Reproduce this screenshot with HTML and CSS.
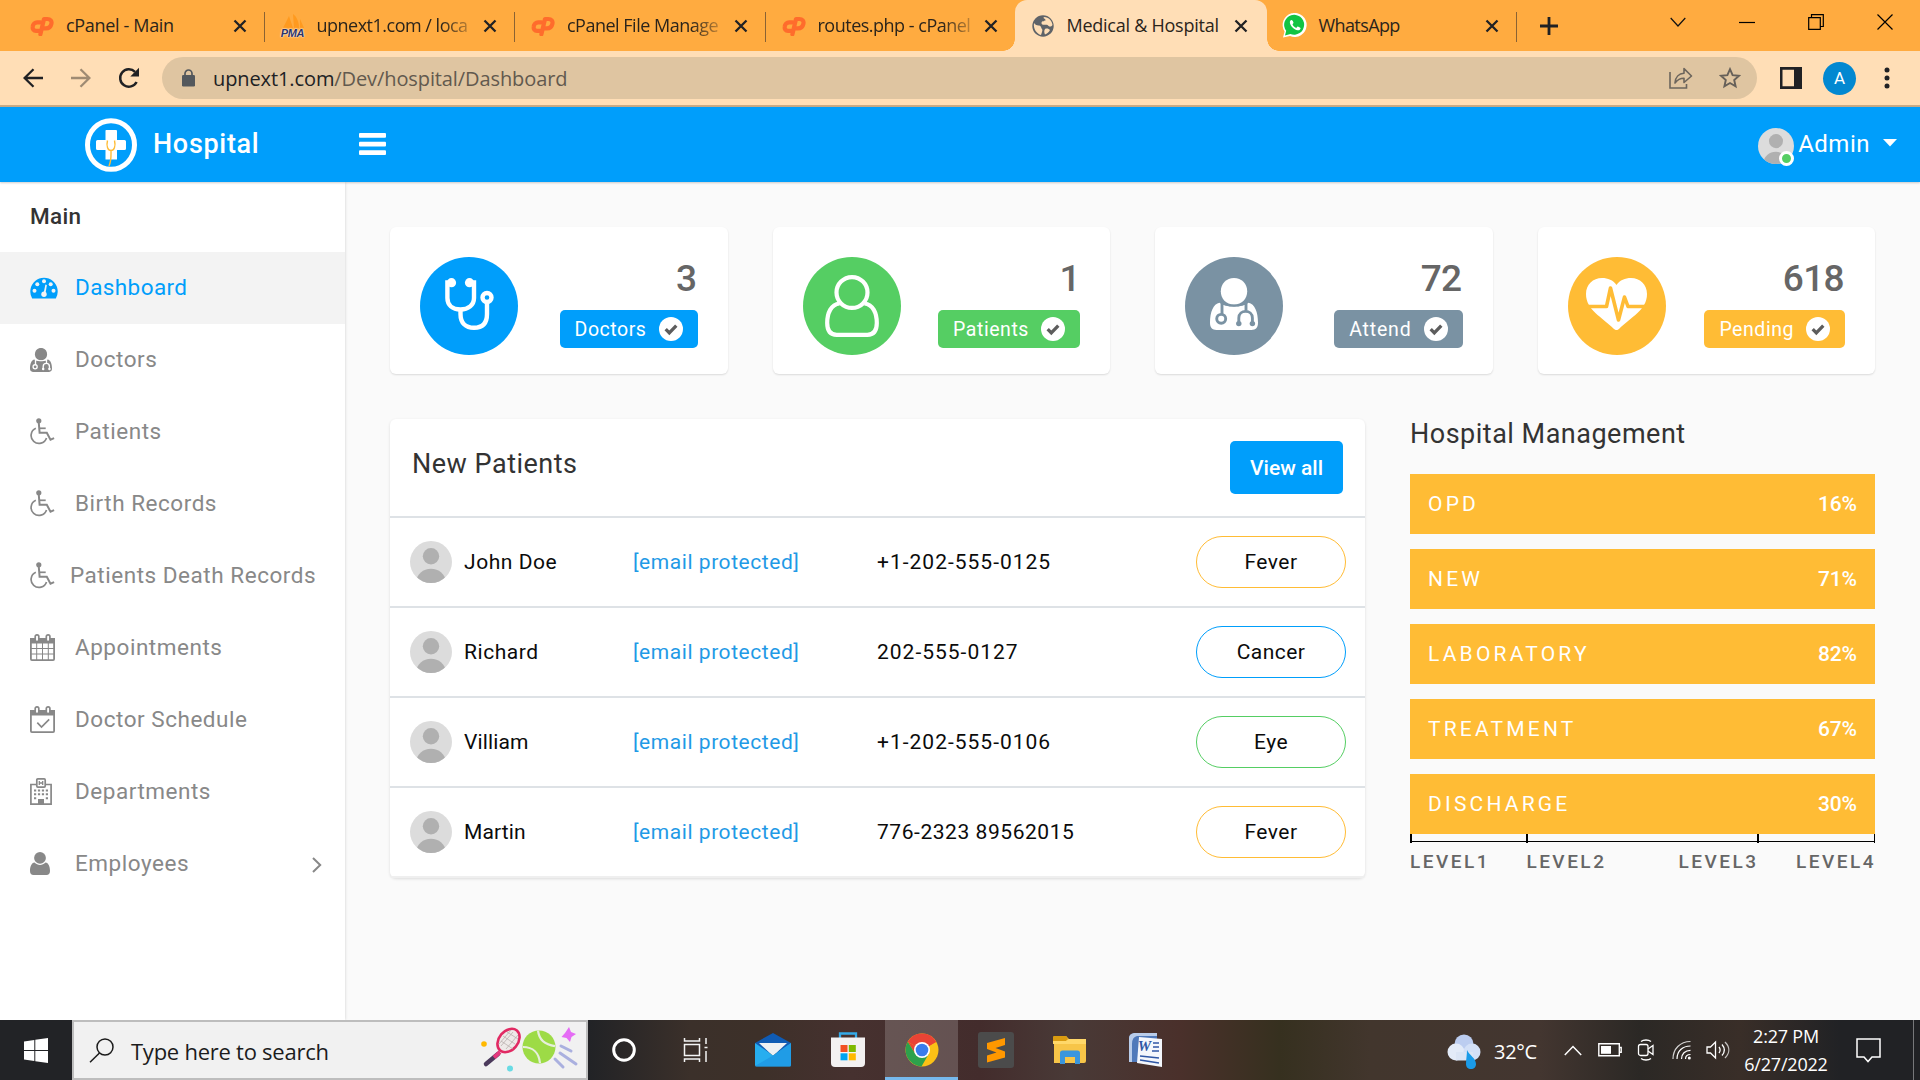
FILE: index.html
```html
<!DOCTYPE html>
<html lang="en">
<head>
<meta charset="utf-8">
<title>Medical &amp; Hospital</title>
<link rel="stylesheet" href="styles.css">
</head>
<body>
<svg class="defs" width="0" height="0" aria-hidden="true">
  <symbol id="cp" viewBox="0 0 24 20"><g fill="none" stroke="#ff6c2c" stroke-width="4.2" stroke-linejoin="round"><path d="M10.5 6.300H7.200a4.700 4.700 0 0 0-4.500 4.200c-.4 2.600 1 4.300 3.300 4.300h3.200" stroke-linecap="round"/><path d="M10.400 18.200l3.600-15.200h3.300c3.200 0 4.700 1.800 4.100 4.700-.6 3-2.700 4.700-5.600 4.700h-1.600" stroke-linecap="round"/></g></symbol>
  <symbol id="x" viewBox="0 0 14 14"><path d="M1.500 1.500l11 11M12.500 1.500l-11 11" stroke="#202124" stroke-width="2.300" fill="none"/></symbol>
  <symbol id="person" viewBox="0 0 42 42"><clipPath id="pc"><circle cx="21" cy="21" r="21"/></clipPath><g clip-path="url(#pc)"><path fill="#dcdcdc" d="M0 0h42v42H0z"/><circle cx="21" cy="15.300" r="8.200" fill="#b0b0b0"/><ellipse cx="21" cy="40.500" rx="14.500" ry="12.700" fill="#b0b0b0"/></g></symbol>
  <symbol id="wheel" viewBox="0 0 25 27"><g fill="none" stroke="currentColor" stroke-width="1.700"><path d="M5.800 10.300a7.900 7.900 0 1 0 10.700 9.700"/><path d="M8.800 5l.8 9.700h7.200l3.700 7 3.600-1.500" stroke-width="2"/><path d="M9.300 10.300h6.400" /></g><circle cx="8.800" cy="2.800" r="2.600" fill="currentColor"/></symbol>
  <symbol id="doc" viewBox="0 0 60 65"><g fill="currentColor"><path d="M30 0c9.500 0 16.500 7 16.500 16.500S40 33 30 33 13.500 26 13.500 16.500 20.500 0 30 0z"/><path d="M12 31c6 6 30 6 36 0 8 1 12 12 12 25 0 6-3 9-8 9H8c-5 0-8-3-8-9 0-13 4-24 12-25z"/></g><g class="cut" fill="none" stroke-width="3.600"><path d="M13 29.500c7 7 27 7 34 0" stroke-width="2.500"/><path d="M15 30v16M45 30v11"/><circle cx="14" cy="51" r="5.600"/><path d="M36 57v-7c0-11 17-11 17 0v7"/></g><g class="cutfill"><circle cx="36" cy="57" r="3.400"/><circle cx="53" cy="57" r="3.400"/></g></symbol>
  <symbol id="check" viewBox="0 0 24 24"><circle cx="12" cy="12" r="12" fill="#fff"/><path d="M6.700 12.200l3.600 3.700 7-7.300" fill="none" stroke="#5d5d5d" stroke-width="3.300"/></symbol>
  <symbol id="cal" viewBox="0 0 25 27"><rect x=".9" y="4.900" width="23.200" height="21.200" rx="1" fill="none" stroke="currentColor" stroke-width="1.800"/><path d="M0 4h25v5.500H0z" fill="currentColor"/><g fill="#fff" stroke="currentColor" stroke-width="1.700"><rect x="5.200" y=".9" width="3.600" height="6.600" rx="1.700"/><rect x="16.300" y=".9" width="3.600" height="6.600" rx="1.700"/></g></symbol>
</svg>

<div class="tabstrip">
  <div class="tab"><svg class="fav" width="26" height="20"><use href="#cp"/></svg><span>cPanel - Main</span><svg class="x" width="14" height="14"><use href="#x"/></svg></div>
  <div class="tab"><span class="pma"><svg width="24" height="15" viewBox="0 0 24 15"><path d="M2 14L8 2l4 12zM13 14L12 0c4 3 6 8 6 14zM19 14V5l4 9z" fill="#ff9a1f"/></svg><b>PMA</b></span><span class="fade">upnext1.com / loca</span><svg class="x" width="14" height="14"><use href="#x"/></svg></div>
  <div class="tab"><svg class="fav" width="26" height="20"><use href="#cp"/></svg><span class="fade">cPanel File Manage</span><svg class="x" width="14" height="14"><use href="#x"/></svg></div>
  <div class="tab last"><svg class="fav" width="26" height="20"><use href="#cp"/></svg><span class="fade">routes.php - cPanel</span><svg class="x" width="14" height="14"><use href="#x"/></svg></div>
  <div class="tab active"><svg class="fav" width="24" height="24" viewBox="0 0 24 24"><circle cx="12" cy="12" r="10.700" fill="#5f6368"/><path d="M3 9c3 4 6 1 7 4s2 2 1 5l-1 3c-4-1-8-6-7-12zM13 3c5 0 8 4 8.500 8-2 3-4 1-5 0s-6 1-6-2 4-1 4-3-3-1-1.500-3zM14 15c2-1 4 0 5 1-1 2-3 4-5 4.500-1-2-1-4 0-5.500z" fill="#ffdeb6"/></svg><span>Medical &amp; Hospital</span><svg class="x" width="14" height="14"><use href="#x"/></svg></div>
  <div class="tab"><svg class="fav" width="26" height="25" viewBox="0 0 26 25"><path d="M1 24.500l1.600-6A12 12 0 1 1 8 23z" fill="#fff"/><path d="M3 22.500l1.200-4.700A10 10 0 1 1 8.400 21z" fill="#12c443"/><path d="M9.700 7c-1.200.1-2 1.300-1.800 2.700.6 3.500 4 6.800 7.700 7.600 1.500.3 2.900-.7 3-2.100 0-.5-2.700-1.900-3.100-1.600l-1.300 1.300c-1.600-.6-3.100-2-3.700-3.600l1-1.200c.2-.6-1-3-1.800-3.100z" fill="#fff"/></svg><span class="tight">WhatsApp</span><svg class="x" width="14" height="14"><use href="#x"/></svg></div>
  <svg class="plus" width="18" height="18" viewBox="0 0 18 18"><path d="M9 0v18M0 9h18" stroke="#202124" stroke-width="2.800"/></svg>
  <div class="caption">
    <svg width="16" height="10" viewBox="0 0 16 10"><path d="M.7 1L8 9l7.300-8" fill="none" stroke="#111" stroke-width="1.200"/></svg>
    <svg width="16" height="10" viewBox="0 0 16 10"><path d="M0 5.500h16" stroke="#000" stroke-width="1.200"/></svg>
    <svg width="16" height="16" viewBox="0 0 16 16"><path d="M.7 3.700h11.600v11.600H.7zM3.500 3.500V.7h11.800v11.800h-2.800" fill="none" stroke="#000" stroke-width="1.200"/></svg>
    <svg width="16" height="16" viewBox="0 0 16 16"><path d="M.5.500l15 15M15.500.5l-15 15" stroke="#000" stroke-width="1.200"/></svg>
  </div>
</div>

<div class="toolbar">
  <svg class="nav" width="20" height="20" viewBox="0 0 20 20"><path d="M20 10H1.600M10.500 1.200L1.600 10l8.900 8.800" fill="none" stroke="#202124" stroke-width="2.300"/></svg>
  <svg class="nav" width="20" height="20" viewBox="0 0 20 20"><path d="M0 10h18.400M9.500 1.200l8.900 8.800-8.900 8.800" fill="none" stroke="#9f8b73" stroke-width="2.300"/></svg>
  <svg class="nav" width="22" height="22" viewBox="0 0 22 22"><path d="M18.600 15A8.700 8.700 0 1 1 17 4.800" fill="none" stroke="#202124" stroke-width="2.500"/><path d="M21 .8v8.700h-8.700z" fill="#202124"/></svg>
  <div class="omnibox">
    <svg width="13" height="18" viewBox="0 0 13 18"><rect y="6" width="13" height="11.500" rx="1.300" fill="#54585c"/><path d="M3 7V4.500a3.500 3.500 0 0 1 7 0V7" fill="none" stroke="#54585c" stroke-width="1.700"/></svg>
    <span class="url">upnext1.com<i>/Dev/hospital/Dashboard</i></span>
    <svg width="24" height="22" viewBox="0 0 24 22"><path d="M1 5v16h16.500v-4" fill="none" stroke="#6c655c" stroke-width="1.600"/><path d="M6 16c.3-6 4-9.500 9-9.700V1.600L22.500 9 15 15.500V11.200c-4 0-6.600 1.500-9 4.800z" fill="none" stroke="#6c655c" stroke-width="1.600" stroke-linejoin="round"/></svg>
    <svg width="22" height="22" viewBox="0 0 22 22"><path d="M11 2.200l2.600 5.900 6.400.6-4.800 4.300 1.400 6.300-5.600-3.300-5.600 3.300L6.800 13 2 8.700l6.400-.6z" fill="none" stroke="#666059" stroke-width="1.900"/></svg>
  </div>
  <svg class="panel" width="22" height="22" viewBox="0 0 22 22"><path fill="#202124" fill-rule="evenodd" d="M0 0h22v22H0zM2.500 2.700v16.600H14V2.700z"/></svg>
  <span class="profile">A</span>
  <svg class="dots" width="6" height="22" viewBox="0 0 6 22"><g fill="#202124"><circle cx="3" cy="3" r="2.500"/><circle cx="3" cy="11" r="2.500"/><circle cx="3" cy="19" r="2.500"/></g></svg>
</div>

<header class="appbar">
  <svg class="logo" width="52" height="54" viewBox="0 0 52 54"><ellipse cx="26" cy="27" rx="23.500" ry="24.300" fill="none" stroke="#fff" stroke-width="5"/><path d="M21 12h10q1 0 1 1v9h7.500q1.500 0 1.500 1.500v7q0 1.500-1.500 1.500H32v9.500H20.500V32h-8q-1.500 0-1.500-1.500v-7q0-1.500 1.500-1.500h8v-9q0-1 .5-1z" fill="#fff"/><path d="M22.500 22.500c-1.500 6 .5 10 3.500 10s5-4 3.500-10M26 32.500c0 6 .5 10-2 15.500" fill="none" stroke="#ffbc35" stroke-width="1.400"/></svg>
  <span class="brand">Hospital</span>
  <svg class="burger" width="27" height="22" viewBox="0 0 27 22"><g fill="#fff"><rect width="27" height="4.800" rx="1"/><rect y="8.700" width="27" height="4.800" rx="1"/><rect y="17.300" width="27" height="4.700" rx="1"/></g></svg>
  <div class="user"><span class="who"><svg width="36" height="36"><use href="#person"/></svg><i></i></span><span>Admin</span><svg width="14" height="8" viewBox="0 0 14 8"><path d="M0 0h14L7 7.500z" fill="#fff"/></svg></div>
</header>

<div class="main">
  <nav class="side">
    <h6>Main</h6>
    <a class="on"><svg width="28" height="22" viewBox="0 0 28 22"><path d="M2.200 21.500A13.700 13.700 0 1 1 25.800 21.500z" fill="#009efb"/><g fill="#f3f3f3"><circle cx="4.500" cy="13.800" r="2"/><circle cx="7.300" cy="7.200" r="2"/><circle cx="14" cy="4.200" r="2"/><circle cx="20.700" cy="7.200" r="2"/><circle cx="23.500" cy="13.800" r="2"/><circle cx="14" cy="17.300" r="2.700"/><path d="M13.400 17l2-9.500 1.500.4-1.600 9.600z"/></g></svg><span>Dashboard</span></a>
    <a><svg width="22" height="24"><use href="#doc"/></svg><span>Doctors</span></a>
    <a><svg width="25" height="27"><use href="#wheel"/></svg><span>Patients</span></a>
    <a><svg width="25" height="27"><use href="#wheel"/></svg><span>Birth Records</span></a>
    <a class="near"><svg width="25" height="27"><use href="#wheel"/></svg><span>Patients Death Records</span></a>
    <a><svg width="25" height="27" viewBox="0 0 25 27"><use href="#cal" width="25" height="27"/><path d="M6.700 9v17M12.500 9v17M18.300 9v17M1 14.500h23M1 20h23" stroke="currentColor" stroke-width="1"/></svg><span>Appointments</span></a>
    <a><svg width="25" height="27" viewBox="0 0 25 27"><use href="#cal" width="25" height="27"/><path d="M7.300 16.700l4.200 4.300 7.700-7.700" fill="none" stroke="currentColor" stroke-width="1.700"/></svg><span>Doctor Schedule</span></a>
    <a><svg width="22" height="27" viewBox="0 0 22 27"><g fill="none" stroke="currentColor" stroke-width="1.700"><path d="M6.500 6.500H.9v19.600h20.200V6.500h-5.600"/><rect x="6.800" y=".9" width="8.400" height="8.200" rx="1"/></g><path d="M9.300 3v4M12.700 3v4M9.300 5h3.400" stroke="currentColor" stroke-width="1.300"/><path d="M4 12.500h14M4 16.300h14" stroke="currentColor" stroke-width="1.900" stroke-dasharray="2.200 1.730"/><path d="M4 20.300h2.200M15.800 20.300H18" stroke="currentColor" stroke-width="1.900"/><path d="M8 21h6v5H8z" fill="currentColor"/></svg><span>Departments</span></a>
    <a><svg width="20" height="23" viewBox="0 0 20 23"><circle cx="10" cy="5.900" r="5.900" fill="currentColor"/><path d="M4.500 10.500c3 3.300 8 3.300 11 0 3 .4 4.500 4 4.500 8.500 0 2.500-1.300 4-3.500 4h-13C1.300 23 0 21.500 0 19c0-4.500 1.500-8.100 4.500-8.500z" fill="currentColor"/></svg><span>Employees</span><svg class="chev" width="10" height="16" viewBox="0 0 10 16"><path d="M1 1l7.200 7L1 15" fill="none" stroke="currentColor" stroke-width="2"/></svg></a>
  </nav>

  <div class="content">
    <section class="cards">
      <div class="card blue"><span class="disc"><svg width="49" height="52" viewBox="0 0 49 52"><g fill="none" stroke="#fff" stroke-width="4.400"><path d="M6 4.500H2.400V20c0 7 5 11.500 13 11.500S29 27 29 20V4.500h-4"/><path d="M15.500 31.500V36c0 9 5 13.800 13.500 13.800S42 45 42 36V25"/><circle cx="42" cy="19.500" r="4.500"/></g><circle cx="6.500" cy="4.700" r="4.600" fill="#fff"/><circle cx="24.500" cy="4.700" r="4.600" fill="#fff"/></svg></span><div><strong>3</strong><span class="tag">Doctors<svg width="24" height="24"><use href="#check"/></svg></span></div></div>
      <div class="card green"><span class="disc"><svg width="54" height="62" viewBox="0 0 54 62"><g fill="none" stroke="#fff" stroke-width="4.200"><ellipse cx="27" cy="17.500" rx="15.500" ry="15.400"/><path d="M14.500 28.500C6 29.500 2.200 38 2.200 48c0 8 3.500 11.800 9.500 11.800h30.600c6 0 9.500-3.800 9.500-11.800 0-10-3.800-18.500-12.300-19.500"/></g></svg></span><div><strong>1</strong><span class="tag">Patients<svg width="24" height="24"><use href="#check"/></svg></span></div></div>
      <div class="card slate"><span class="disc"><svg width="48" height="52"><use href="#doc"/></svg></span><div><strong>72</strong><span class="tag">Attend<svg width="24" height="24"><use href="#check"/></svg></span></div></div>
      <div class="card amber"><span class="disc"><svg width="61" height="52" viewBox="0 0 61 52"><path d="M30.500 7C34 2 39 0 45 0c9 0 16 6.500 16 16 0 16-16 23-28 35-1.700 1.500-3.300 1.500-5 0C16 39 0 32 0 16 0 6.500 7 0 16 0c6 0 11 2 14.500 7z" fill="#fff"/><path d="M0 28.500h20.500l4-18.500 8 32 6-23 3.500 9.500h19" fill="none" stroke="#ffbc35" stroke-width="3.600" stroke-linejoin="round"/></svg></span><div><strong>618</strong><span class="tag">Pending<svg width="24" height="24"><use href="#check"/></svg></span></div></div>
    </section>

    <div class="lower">
      <section class="patients">
        <div class="head"><h4>New Patients</h4><a>View all</a></div>
        <div class="row"><svg width="42" height="42"><use href="#person"/></svg><span>John Doe</span><a>[email protected]</a><span class="ph">+1-202-555-0125</span><em class="amber">Fever</em></div>
        <div class="row"><svg width="42" height="42"><use href="#person"/></svg><span>Richard</span><a>[email protected]</a><span class="ph">202-555-0127</span><em class="blue">Cancer</em></div>
        <div class="row"><svg width="42" height="42"><use href="#person"/></svg><span class="vil">Villiam</span><a>[email protected]</a><span class="ph">+1-202-555-0106</span><em class="green">Eye</em></div>
        <div class="row"><svg width="42" height="42"><use href="#person"/></svg><span class="vil">Martin</span><a>[email protected]</a><span>776-2323 89562015</span><em class="amber">Fever</em></div>
      </section>
      <section class="manage">
        <h4>Hospital Management</h4>
        <div class="bar"><span>OPD</span><b>16%</b></div>
        <div class="bar"><span>NEW</span><b>71%</b></div>
        <div class="bar"><span>LABORATORY</span><b>82%</b></div>
        <div class="bar"><span>TREATMENT</span><b>67%</b></div>
        <div class="bar"><span>DISCHARGE</span><b>30%</b></div>
        <svg class="axis" width="465" height="9" viewBox="0 0 465 9"><path d="M0 7h465v1H0zM0 0h2v9H0zM116 0h2v9h-2zM347 0h2v9h-2zM464 0h1v9h-1z"/></svg>
        <div class="levels"><span>LEVEL1</span><span>LEVEL2</span><span class="r">LEVEL3</span><span class="r">LEVEL4</span></div>
      </section>
    </div>
  </div>
</div>

<footer class="taskbar">
  <div class="start"><svg width="24" height="25" viewBox="0 0 24 25"><path d="M0 3.500L10.300 2v10H0zM11.300 1.800L24 0v12H11.300zM0 13h10.300v10L0 21.500zM11.300 13H24v12l-12.700-1.800z" fill="#fff"/></svg></div>
  <div class="search">
    <svg width="25" height="25" viewBox="0 0 25 25"><circle cx="16" cy="9" r="8" fill="none" stroke="#1b1b1b" stroke-width="1.500"/><path d="M10.500 15L1 24.300" stroke="#1b1b1b" stroke-width="1.500"/></svg>
    <span>Type here to search</span>
    <svg class="art" width="98" height="48" viewBox="0 0 98 48"><circle cx="3" cy="18" r="2.800" fill="#ffb900"/><circle cx="29" cy="42.500" r="3" fill="#69dbe4"/><path d="M17 28L5 38" stroke="#4b3a5c" stroke-width="4.500" stroke-linecap="round"/><path d="M19 26l-6 5.500" stroke="#e5397d" stroke-width="4"/><ellipse cx="27.500" cy="14.500" rx="13" ry="9.500" transform="rotate(-50 27.500 14.500)" fill="#eee9e8" stroke="#e12a63" stroke-width="2.600"/><path d="M20 15l12 8M22 10l12 8M26 6l11 7M20 20l12-14M25 23l12-14M18 18L30 4" stroke="#b3aaa8" stroke-width=".7"/><circle cx="58" cy="21" r="16.500" fill="#9ddb46"/><path d="M57 4.700c1 9 6 14 17 15.500M42 21c10 0 16 6 17 16" fill="none" stroke="#e7efdc" stroke-width="2.200"/><path d="M88 1l2 5 5 2-4.500 3-1.500 5-3.500-4-5-1 3.500-4z" fill="#e56cf5"/><path d="M80 20l10 5M79 27l16 11M74 33l8 8" stroke="#aab0df" stroke-width="3" stroke-linecap="round"/></svg>
  </div>
  <div class="apps">
    <i><svg width="26" height="26" viewBox="0 0 26 26"><circle cx="13" cy="13" r="10.300" fill="none" stroke="#fff" stroke-width="3"/></svg></i>
    <i class="view"><svg width="26" height="26" viewBox="0 0 26 26"><path d="M1.500 1v3h15V1M1.500 25v-3h15v3M1.500 7.500h15v11h-15zM23 1v6M23 14v11M21.500 10.500h3" fill="none" stroke="#f4f4f4" stroke-width="1.500"/></svg></i>
    <i><svg width="38" height="34" viewBox="0 0 38 34"><path d="M1 10L19 0l18 10-7 10H8z" fill="#0f5bb4"/><path d="M5 10h28L19 23z" fill="#eef0f3"/><path d="M1 10l18 12.500L37 10v22q0 1.500-1.500 1.500h-33Q1 33.500 1 32z" fill="#27aeef"/><path d="M1 33L19 22.500 37 10v22q0 1.500-1.500 1.500h-33z" fill="#1c8fe0" opacity=".6"/></svg></i>
    <i><svg width="36" height="36" viewBox="0 0 36 36"><path d="M10 7V1.500h16V7" fill="none" stroke="#35aae8" stroke-width="2.300"/><path d="M1 5.500h34V31q0 4-4 4H5q-4 0-4-4z" fill="#f3f1f1"/><path d="M10.500 13h7v7h-7z" fill="#f25022"/><path d="M18.800 13h7v7h-7z" fill="#7fba00"/><path d="M10.500 21.300h7v7h-7z" fill="#00a4ef"/><path d="M18.800 21.300h7v7h-7z" fill="#ffb900"/></svg></i>
    <i class="open"><svg width="34" height="34" viewBox="0 0 34 34"><circle cx="17" cy="17" r="16.500" fill="#fbc116"/><path d="M17 17L2.700 8.800A16.500 16.500 0 0 1 31.300 8.800z" fill="#ea4335"/><path d="M17 17l14.300-8.200H17zM2.700 8.800L10.500 21l6.500-4z" fill="#ea4335"/><path d="M2.700 8.800A16.500 16.500 0 0 0 16.500 33.500L23.700 21 10.300 20.800z" fill="#2da14c"/><circle cx="17" cy="17" r="8" fill="#fff"/><circle cx="17" cy="17" r="6.300" fill="#3a7cec"/></svg></i>
    <i><svg width="36" height="36" viewBox="0 0 36 36"><rect width="36" height="36" rx="3" fill="#4b4b4b"/><path d="M27 6v7l-9.500 3 9.500 3.500v6L9 30.500v-7l9.500-3L9 17v-6z" fill="#ff9800"/></svg></i>
    <i><svg width="34" height="28" viewBox="0 0 34 28"><path d="M1 0h12l3 3h17v22q0 2-2 2H1z" fill="#f7c548"/><path d="M0 1q0-1 1-1h12l2 3-2 2H0z" fill="#d99b10"/><path d="M0 5h13l3-2h17v5H0z" fill="#ffd869"/><path d="M7 28V17q0-2.500 2.500-2.500h15Q27 14.500 27 17v11h-5v-7H12v7z" fill="#3a96dd"/></svg></i>
    <i><span class="word"><svg width="34" height="36" viewBox="0 0 34 36"><path d="M6 1h23v29H1V6q0-4 5-5z" fill="#4f79ba"/><path d="M6 1h23v3H9Q4 5 4 12v18H1V6q0-4 5-5z" fill="#b9cdea"/><path d="M11 5l23 2v28L9 31z" fill="#f4f7fc"/><path d="M25 11h6M25 15h6M24 19h7M12 24l19 2M12 28l19 3" stroke="#2f57a5" stroke-width="1.700"/></svg><b>W</b></span></i>
  </div>
  <div class="tray">
    <svg class="weather" width="36" height="36" viewBox="0 0 36 36"><circle cx="17" cy="10" r="9.500" fill="#bccdf0"/><circle cx="9" cy="18" r="8.500" fill="#e3ebf8"/><circle cx="25" cy="18" r="8.500" fill="#d3e0f7"/><path d="M9 18h17v8.500H9z" fill="#dbe5f5"/><path d="M20 16c2 5 9 8 9 14 0 3-2 5-5 5s-5-2-5-5c0-5 1-9 1-14z" fill="#1a9be8"/></svg>
    <span class="temp">32°C</span>
    <svg class="up" width="18" height="11" viewBox="0 0 18 11"><path d="M.8 10L9 1.500l8.200 8.500" fill="none" stroke="#fff" stroke-width="1.500"/></svg>
    <svg class="bat" width="24" height="14" viewBox="0 0 24 14"><path d="M.8.800h20.500v12H.8zM21.500 4.500h1.700v4.800h-1.700" fill="none" stroke="#fff" stroke-width="1.400"/><path d="M3 3h10v7.800H3z" fill="#fff"/></svg>
    <svg class="meet" width="18" height="22" viewBox="0 0 18 22"><g fill="none" stroke="#fff" stroke-width="1.300"><rect x="1.500" y="5.500" width="9.500" height="11" rx="2"/><path d="M11 10l5-3.500v9L11 12M4 2.500c2.500-2 7.500-2 10 0M4 19.500c2.500 2 7.500 2 10 0"/></g></svg>
    <svg class="wifi" width="20" height="20" viewBox="0 0 20 20"><g fill="none" stroke="#fff" stroke-width="1.200"><path d="M1 19C1 9 8 1.500 18.500 1.500" opacity=".8"/><path d="M5 19C5 11 10.500 6 18.500 6"/><path d="M9.500 19c0-5 3.500-8.700 9-8.700"/><path d="M13.500 19c0-3 2-4.500 5-4.500"/></g><circle cx="17.300" cy="18" r="1.500" fill="#fff"/></svg>
    <svg class="vol" width="24" height="20" viewBox="0 0 24 20"><g fill="none" stroke="#fff" stroke-width="1.300"><path d="M1 7h3.500L9.500 2v16l-5-5H1z"/><path d="M13 7c1.500 2 1.500 4 0 6M16 4.500c3 3.500 3 7.500 0 11"/><path d="M19 2c5 5 5 11 0 16" opacity=".7"/></g></svg>
    <div class="clock"><span>2:27 PM</span><span>6/27/2022</span></div>
    <svg class="note" width="25" height="25" viewBox="0 0 25 25"><path d="M1 1h23v18H16l-4 4.500L8 19H1z" fill="none" stroke="#fff" stroke-width="1.500"/></svg>
    <s></s>
  </div>
</footer>
</body>
</html>
```
FILE: styles.css
```css
*{box-sizing:border-box}
body{margin:0;width:1920px;height:1080px;overflow:hidden;background:#fafafa;font-family:Roboto,"Liberation Sans",sans-serif;display:flex;flex-direction:column}
h4,h6{margin:0;font-weight:400}
i,em{font-style:normal}
svg{flex:none;display:block}
.defs{position:absolute}

/* browser chrome */
.tabstrip{height:51px;background:#ffab40;display:flex;padding-left:14px;font:18px "Open Sans",sans-serif;letter-spacing:-.33px;color:#2b241b;flex:none}
.tab{width:250.5px;display:flex;align-items:center;padding:0 18px 0 15px;position:relative}
.tab>span:not(.pma){margin:-1px 0 0 11px;white-space:nowrap}
.tab>.fade{letter-spacing:-.5px;-webkit-mask-image:linear-gradient(90deg,#000 124px,rgba(0,0,0,.15) 158px);mask-image:linear-gradient(90deg,#000 124px,rgba(0,0,0,.15) 158px)}
.tab>.tight{letter-spacing:-.6px}
.tab .x{margin-left:auto}
.tab::after{content:"";position:absolute;right:0;top:12px;width:1px;height:30px;background:#8a6233}
.tab.last::after,.tab.active::after{display:none}
.tab.active{background:#ffdeb6;border-radius:12px 12px 0 0;margin-left:-1.500px;width:252px;padding-right:19px;padding-left:16px;letter-spacing:-.25px}
.tab.active>span{margin-left:12px}
.tab.active::before{content:"";position:absolute;left:-12px;right:-12px;bottom:0;height:12px;background:radial-gradient(circle at 0 0,transparent 11.500px,#ffdeb6 12px) left/12px 12px no-repeat,radial-gradient(circle at 100% 0,transparent 11.500px,#ffdeb6 12px) right/12px 12px no-repeat}
.pma{width:26px;display:flex;flex-direction:column;align-items:center;margin-top:1px}
.pma b{font:italic 700 11px/9px "Liberation Sans",sans-serif;letter-spacing:-.3px;color:#2e3364;text-shadow:0 0 1px #fff,0 0 2px #fff}
.plus{margin:16.500px 0 0 23px}
.caption{margin-left:auto;display:flex;align-items:center;gap:53px;height:43px;padding-right:27px}
.toolbar{height:56px;background:#ffdeb6;border-bottom:2px solid #c9ab86;display:flex;align-items:center;flex:none;padding-left:23px}
.nav{margin-right:28px}
.nav+.nav{margin-right:27px}
.nav+.nav+.nav{margin-right:22px}
.omnibox{width:1595px;height:42px;border-radius:21px;background:#dfc5a1;display:flex;align-items:center;padding:0 16px 0 20px;font:20px "Open Sans",sans-serif;color:#202124;letter-spacing:-.1px}
.omnibox .url{margin:0 auto 0 18px}
.url i{color:#62594e}
.omnibox svg+svg{margin-left:26px}
.panel{margin-left:23px}
.profile{width:33px;height:33px;border-radius:50%;background:#0288d1;color:#fff;font:17px/33px Roboto,sans-serif;text-align:center;margin:0 28px 0 21px}

/* application header */
.appbar{height:75px;background:#009efb;color:#fff;display:flex;align-items:center;flex:none;padding-left:85px;box-shadow:0 1px 2px rgba(0,0,0,.2);position:relative}
.brand{font-size:27px;font-weight:500;letter-spacing:.7px;margin:-1px 0 0 16px;width:206px}
.burger{margin:-2px 0 0 0}
.user{margin-left:auto;display:flex;align-items:center;font-size:24px;font-weight:400;letter-spacing:.5px;padding-right:23px}
.user>span{margin-top:-1px}
.user>.who{position:relative;margin:3px 4px 0 0}
.who i{position:absolute;right:0;bottom:-2px;width:15px;height:15px;border:3px solid #fff;border-radius:50%;background:#55ce63}
.user>svg{margin:-4px 0 0 13px}

/* layout */
.main{display:flex;height:838px;flex:none}
.side{width:345px;background:#fff;box-shadow:0 0 3px rgba(0,0,0,.18);color:#888}
.side h6{height:70px;padding:21px 30px;font-size:22.500px;line-height:27px;font-weight:500;letter-spacing:.3px;color:#333}
.side a{height:72px;display:flex;align-items:center;padding:0 23px 0 30px;font-size:22.500px;letter-spacing:.53px}
.side a>span{margin-top:-2px;flex:1;white-space:nowrap}
.side a>svg:first-child{margin-right:20px;margin-top:-1px}
.side a>svg[width="20"]:first-child{margin-right:25px}
.side a>svg[width="22"]:first-child{margin-right:23px}
.side a>svg[width="28"]:first-child{margin-right:17px}
.side a.near>svg:first-child{margin-right:15px}
.side .on{background:#f3f3f3;color:#009efb;letter-spacing:.4px}
.side .chev{margin-top:1px}
.cut{stroke:var(--cut,#fff)}
.cutfill{fill:var(--cut,#fff)}
.content{flex:1;padding:45px}

/* summary cards */
.cards{display:grid;grid-template-columns:repeat(4,1fr);gap:45px}
.card{height:147px;background:#fff;border-radius:6px;box-shadow:0 1px 2px rgba(0,0,0,.13);display:flex;justify-content:space-between;padding:30px 30px 0}
.disc{width:98px;height:98px;border-radius:50%;background:var(--c);display:flex;align-items:center;justify-content:center;color:#fff}
.blue{--c:#009efb}.green{--c:#55ce63}.slate{--c:#7a92a3;--cut:#7a92a3}.amber{--c:#ffbc35}
.blue .disc svg,.slate .disc svg,.amber .disc svg{margin-top:-4px}
.card>div{display:flex;flex-direction:column;align-items:flex-end}
.card strong{font-size:37px;line-height:42px;font-weight:500;letter-spacing:-.6px;color:#666;margin:1px 0 10px}
.slate strong,.amber strong,.blue strong{padding-right:1px}
.tag{height:38px;border-radius:5px;background:var(--c);color:#fff;font-size:19.500px;letter-spacing:.55px;display:flex;align-items:center;gap:12px;padding:0 15px}
.slate .tag{letter-spacing:.8px}

/* patients table */
.lower{display:flex;gap:45px;margin-top:45px;align-items:flex-start}
.patients{width:975px;background:#fff;border-radius:6px;box-shadow:0 1px 3px rgba(0,0,0,.12);font-size:21px;letter-spacing:.55px;color:#0b0b0b}
.patients::after{content:"";display:block;height:2px;background:#efefef;border-radius:0 0 6px 6px}
.head{height:97px;display:flex;justify-content:space-between;padding:22px 22px 0 22px}
h4{font-size:27px;line-height:32px;letter-spacing:.5px;color:#333}
.head h4{margin-top:7px}
.head a{width:113px;height:53px;border-radius:5px;background:#009efb;color:#fff;font-weight:500;line-height:54px;text-align:center;letter-spacing:0}
.row{height:90px;border-top:2px solid #dee2e6;display:grid;grid-template-columns:54px 169px 244px 319px 150px;align-items:center;padding-left:20px}
.row a{color:#1f9ae6}
.row .ph{letter-spacing:1px}
.row .vil{letter-spacing:.15px}
.row em{height:52px;line-height:50px;border:1px solid var(--c);border-radius:26px;text-align:center;letter-spacing:.45px}

/* management bars */
.manage{width:465px}
.manage h4{margin:-1px 0 24px;height:32px}
.bar{height:60px;background:#ffbc35;color:#fff;display:flex;align-items:center;justify-content:space-between;padding:0 18px;font-size:21px;letter-spacing:3.200px}
.bar+.bar{margin-top:15px}
.bar b{font-weight:500;letter-spacing:-.1px}
.levels{display:flex;font-size:19px;font-weight:500;letter-spacing:2.500px;color:#666;line-height:22px;margin-top:8px}
.levels span{width:116.500px}
.levels .r{text-align:right;margin-right:-1px}
.levels .r:nth-child(3){width:116px;margin-right:1px}

/* taskbar */
.taskbar{height:60px;flex:none;display:flex;color:#fff;background:linear-gradient(90deg,#222326 0,#222326 590px,#3b302a 690px,#3d3029 760px,#46312f 850px,#432c2c 980px,#493a37 1070px,#4a302b 1180px,#36301f 1280px,#42362d 1370px,#433630 1540px,#2b2825 1640px,#392e28 1740px,#212225 1840px);font-family:"Open Sans",sans-serif}
.start{width:72px;display:flex;align-items:center;justify-content:center}
.search{width:516px;background:#f1f1f1;border:2px solid #bdbdbd;display:flex;align-items:center;padding:0 7px 0 15px;font-size:22px;letter-spacing:-.25px;color:#1c1c1c}
.search span{margin:0 auto 0 17px;padding-top:1px}
.apps{display:flex;width:595px;margin-left:-1px}
.apps i{width:74.700px;display:flex;align-items:center;justify-content:center;padding-bottom:1px}
.apps .view{padding-right:5px}
.apps .open{width:73px;background:rgba(255,255,255,.18);border-bottom:3px solid #76b9ed;padding:3px 0 0}
.word{position:relative}
.word b{position:absolute;left:10px;top:6px;font:italic 700 15px/16px "Liberation Serif",serif;color:#2f57a5}
.tray{flex:1;display:flex;align-items:center;padding-left:265px}
.temp{font-size:20px;letter-spacing:-.3px;width:43px;margin:2px 27px 0 11px;white-space:nowrap}
.weather{margin-top:3px}
.up{margin-right:16px}.bat{margin-right:15px}.meet{margin-right:17px}.wifi{margin-right:14px}
.clock{width:110px;display:flex;flex-direction:column;align-items:center;font-size:18px;line-height:28px;letter-spacing:-.2px;margin:-1px 15px 0 1px}
s{margin-left:auto;margin-right:6px;width:1px;height:60px;background:#77787a}
```
